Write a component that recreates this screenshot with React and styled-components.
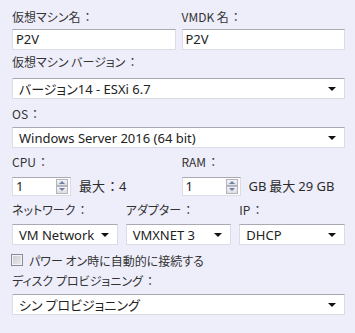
import styled, { createGlobalStyle } from "styled-components";

const GlobalStyle = createGlobalStyle`
  html, body {
    margin: 0;
    padding: 0;
    background: #eeeefb;
  }
  body {
    font-family: "Noto Sans CJK JP", "Noto Sans", sans-serif;
    font-feature-settings: "palt";
    color: #2b2b2b;
  }
`;

const Page = styled.div`
  width: 355px;
  height: 333px;
  box-sizing: border-box;
  padding: 9px 10px 0 12px;
  display: flex;
  flex-direction: column;
`;

const Section = styled.div`
  display: grid;
  grid-template-columns: ${p => p.$cols || "1fr"};
  column-gap: ${p => p.$colGap || 0}px;
  margin-top: ${p => p.$top || 0}px;
`;

const Field = styled.div`
  display: flex;
  flex-direction: column;
  min-width: 0;
`;

const Label = styled.div`
  font-size: 12px;
  line-height: 16px;
  height: 16px;
  white-space: nowrap;
  margin-bottom: ${p => p.$gap || 4}px;
  color: #333;
`;

// full-width colon keeps its side bearings, as in the original UI font
const Colon = styled.span`
  font-feature-settings: normal;
  margin-left: 1px;
`;

const boxBorder = `
  box-sizing: border-box;
  background: #fff;
  border: 1px solid #dcdce6;
  border-top-color: #a9a9b3;
`;

const TextInput = styled.div`
  ${boxBorder}
  height: 21px;
  padding: 0 3px;
  font-size: 13px;
  line-height: 19px;
  color: #222;
  font-family: "Noto Sans", "Noto Sans CJK JP", sans-serif;
`;

const SelectBox = styled.div`
  ${boxBorder}
  height: 21px;
  padding: 0 22px 0 6px;
  position: relative;
  font-size: 13px;
  line-height: 19px;
  color: #222;
  white-space: nowrap;
  overflow: hidden;
  &::after {
    content: "";
    position: absolute;
    right: 8px;
    top: 8px;
    border-left: 4px solid transparent;
    border-right: 4px solid transparent;
    border-top: 4px solid #111;
  }
`;

const Latin = styled.span`
  font-family: "Noto Sans", "Noto Sans CJK JP", sans-serif;
`;

const SpinRow = styled.div`
  display: flex;
  align-items: center;
  gap: 8px;
`;

const SpinInput = styled.div`
  ${boxBorder}
  width: 59px;
  height: 19px;
  display: flex;
  align-items: stretch;
  padding: 0 2px 0 3px;
`;

const SpinValue = styled.div`
  flex: 1;
  font-size: 13px;
  line-height: 17px;
  color: #222;
  font-family: "Noto Sans", sans-serif;
`;

const SpinButtons = styled.div`
  width: 12px;
  display: flex;
  flex-direction: column;
  padding: 1px 0;
`;

const SpinButton = styled.div`
  flex: 1;
  box-sizing: border-box;
  border: 1px solid #b4b4bc;
  background: linear-gradient(#f4f4f8, #dcdce4);
  display: flex;
  align-items: center;
  justify-content: center;
  &::after {
    content: "";
    border-left: 3px solid transparent;
    border-right: 3px solid transparent;
    ${p => (p.$down ? "border-top: 3px solid #6f7fa0;" : "border-bottom: 3px solid #6f7fa0;")}
  }
`;

const Note = styled.span`
  font-size: 13px;
  line-height: 19px;
  color: #2b2b2b;
  white-space: nowrap;
`;

const CheckRow = styled.label`
  display: flex;
  align-items: center;
  gap: 6px;
  height: 16px;
  font-size: 12px;
  color: #333;
`;

const CheckBox = styled.span`
  width: 12px;
  height: 12px;
  box-sizing: border-box;
  border: 1px solid #8a8a92;
  background: linear-gradient(135deg, #c8c8ce, #ececf0);
  box-shadow: inset 0 0 0 1px #f4f4f6;
  margin-left: -1px;
`;

const Spinner = ({ value }) => (
  <SpinInput>
    <SpinValue>{value}</SpinValue>
    <SpinButtons>
      <SpinButton />
      <SpinButton $down />
    </SpinButtons>
  </SpinInput>
);

const C = () => <Colon>：</Colon>;

export default function App() {
  return (
    <>
      <GlobalStyle />
      <Page>
        <Section $cols="1fr 1fr" $colGap={6}>
          <Field>
            <Label>仮想マシン名<C /></Label>
            <TextInput>P2V</TextInput>
          </Field>
          <Field>
            <Label>VMDK 名<C /></Label>
            <TextInput>P2V</TextInput>
          </Field>
        </Section>

        <Section $top={4}>
          <Field>
            <Label $gap={8}>仮想マシン バージョン<C /></Label>
            <SelectBox>バージョン<Latin>14 - ESXi 6.7</Latin></SelectBox>
          </Field>
        </Section>

        <Section $top={7}>
          <Field>
            <Label $gap={5}>OS<C /></Label>
            <SelectBox><Latin>Windows Server 2016 (64 bit)</Latin></SelectBox>
          </Field>
        </Section>

        <Section $top={6} $cols="1fr 1fr" $colGap={6}>
          <Field>
            <Label $gap={6}>CPU<C /></Label>
            <SpinRow>
              <Spinner value="1" />
              <Note>最大<Colon>：</Colon><Latin>4</Latin></Note>
            </SpinRow>
          </Field>
          <Field>
            <Label $gap={6}>RAM<C /></Label>
            <SpinRow>
              <Spinner value="1" />
              <Note><Latin>GB</Latin> 最大 <Latin>29 GB</Latin></Note>
            </SpinRow>
          </Field>
        </Section>

        <Section $top={6} $cols="1fr 1fr 1fr" $colGap={8}>
          <Field>
            <Label $gap={6}>ネットワーク<C /></Label>
            <SelectBox><Latin>VM Network</Latin></SelectBox>
          </Field>
          <Field>
            <Label $gap={6}>アダプター<C /></Label>
            <SelectBox><Latin>VMXNET 3</Latin></SelectBox>
          </Field>
          <Field>
            <Label $gap={6}>IP<C /></Label>
            <SelectBox><Latin>DHCP</Latin></SelectBox>
          </Field>
        </Section>

        <Section $top={7}>
          <CheckRow>
            <CheckBox />
            パワー オン時に自動的に接続する
          </CheckRow>
        </Section>

        <Section $top={5}>
          <Field>
            <Label $gap={5}>ディスク プロビジョニング<C /></Label>
            <SelectBox>シン プロビジョニング</SelectBox>
          </Field>
        </Section>
      </Page>
    </>
  );
}
